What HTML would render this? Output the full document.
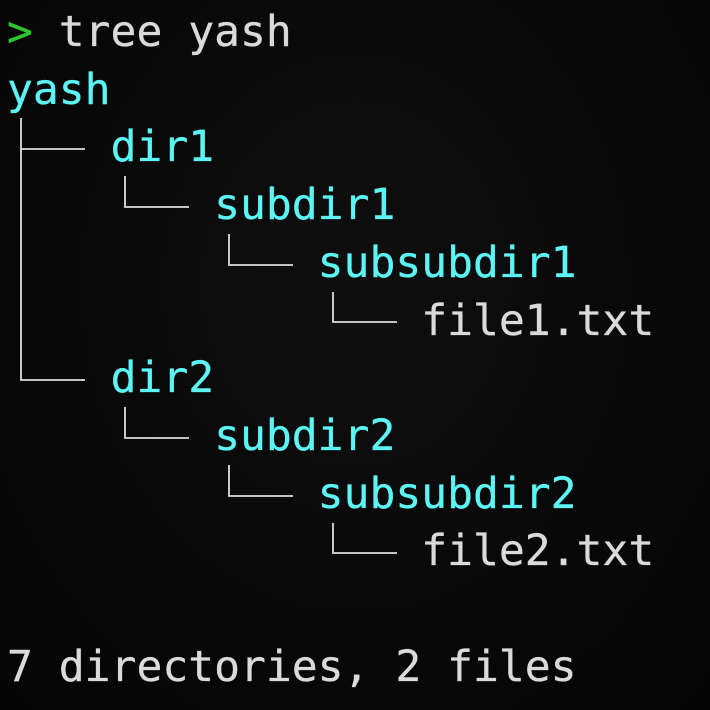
<!DOCTYPE html>
<html><head><meta charset="utf-8"><style>
html,body{margin:0;padding:0;}
body{width:710px;height:710px;overflow:hidden;position:relative;
background:radial-gradient(ellipse at 50% 40%,#0f0f0f 0%,#080808 60%,#050505 100%);
font-family:"DejaVu Sans Mono","Liberation Mono",monospace;font-size:43px;}
.l{position:absolute;left:7px;height:58px;line-height:58px;white-space:pre;color:#dadada;-webkit-text-stroke:0.3px currentColor;}
.c{color:#5cf4f4;}
.g{color:#2bc72b;}
svg{position:absolute;left:0;top:0;}
</style></head><body>
<div class="l" style="top:3px"><span class="g">&gt;</span> tree yash</div>
<div class="l c" style="top:60.7px">yash</div>
<div class="l" style="top:118.4px">    <span class="c">dir1</span></div>
<div class="l" style="top:176.1px">        <span class="c">subdir1</span></div>
<div class="l" style="top:233.8px">            <span class="c">subsubdir1</span></div>
<div class="l" style="top:291.5px">                file1.txt</div>
<div class="l" style="top:349.2px">    <span class="c">dir2</span></div>
<div class="l" style="top:406.9px">        <span class="c">subdir2</span></div>
<div class="l" style="top:464.6px">            <span class="c">subsubdir2</span></div>
<div class="l" style="top:522.3px">                file2.txt</div>
<div class="l" style="top:637.7px">7 directories, 2 files</div>
<svg width="710" height="710" fill="none" stroke="#dcdcdc" stroke-width="1.8">
<path d="M21 118V380H85M21 149H85"/>
<path d="M125 176V207H189"/>
<path d="M229 234V265H293"/>
<path d="M333 292V322H397"/>
<path d="M125 407V438H189"/>
<path d="M229 465V496H293"/>
<path d="M333 523V553H397"/>
</svg>
</body></html>
